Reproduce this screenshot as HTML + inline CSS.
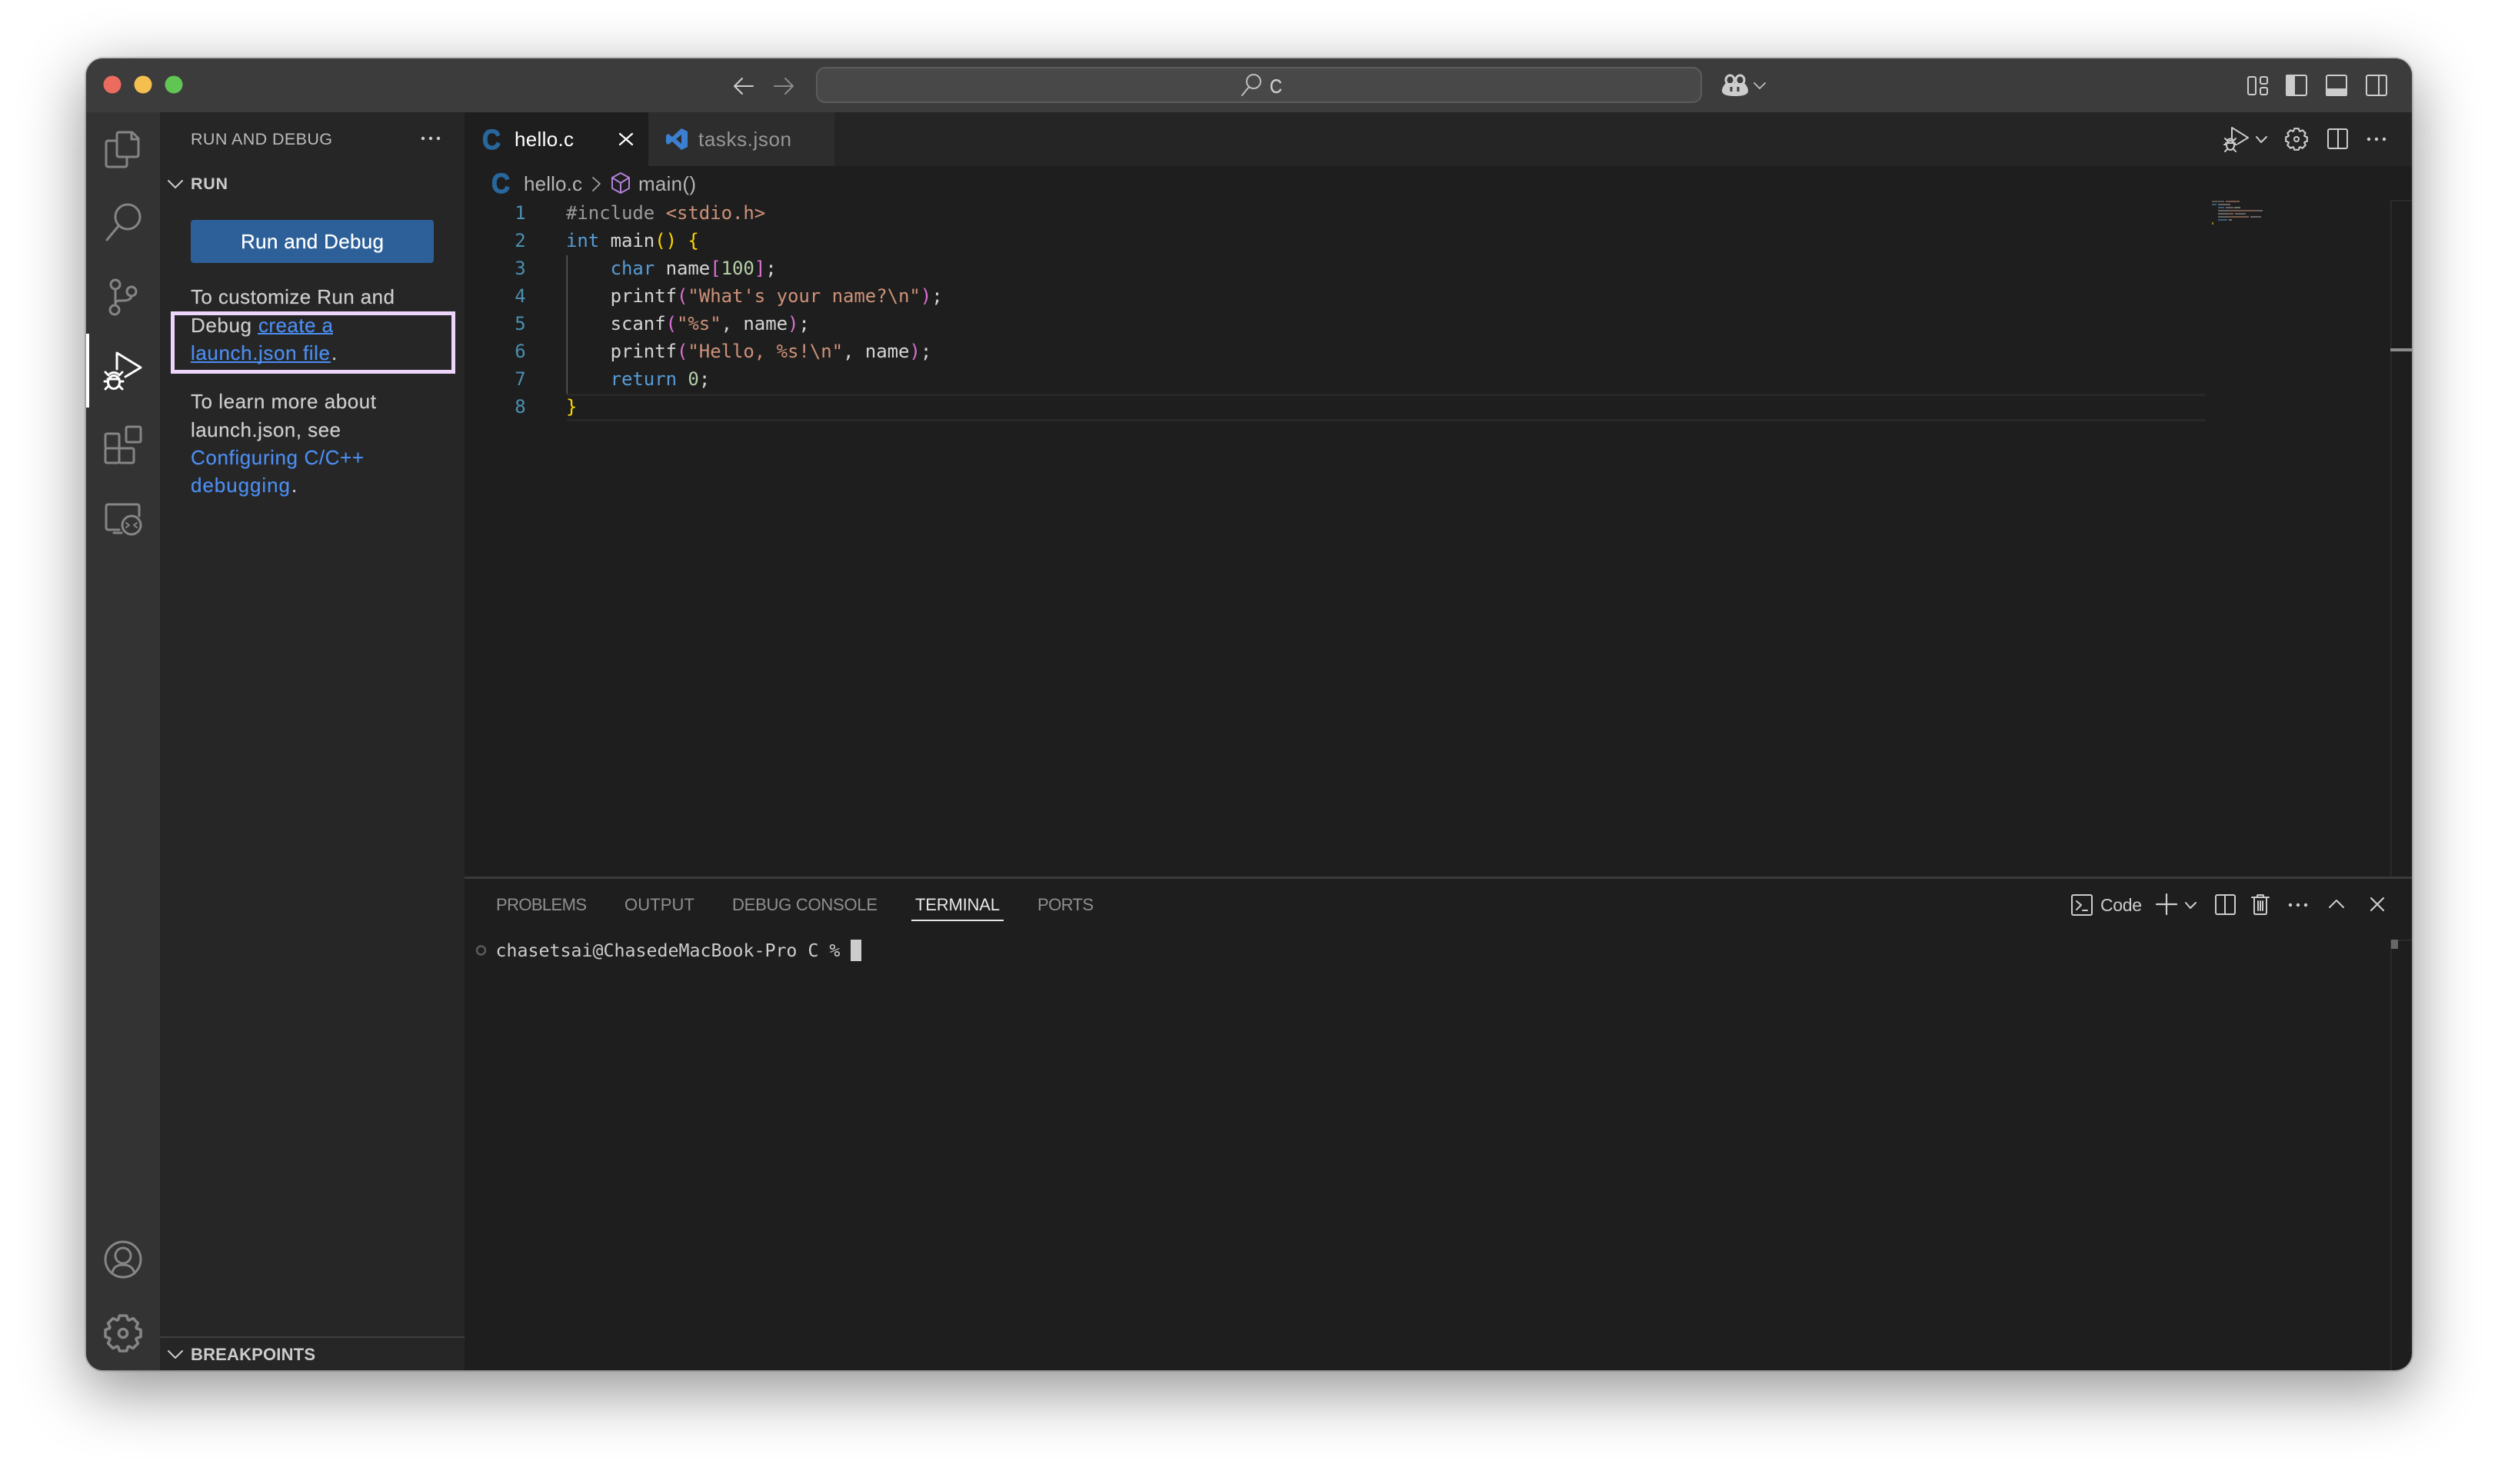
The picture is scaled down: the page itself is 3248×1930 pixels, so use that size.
<!DOCTYPE html>
<html><head><meta charset="utf-8"><style>
html,body{margin:0;padding:0;background:#fff;width:3248px;height:1930px;overflow:hidden}
#win{position:absolute;left:112px;top:76px;width:3024px;height:1706px;border-radius:22px;box-shadow:0 0 2px 1px rgba(0,0,0,.35),0 24px 80px 4px rgba(0,0,0,.42)}
svg{position:absolute;left:0;top:0}
text{font-family:"Liberation Sans",sans-serif;white-space:pre}
.m{font-family:"DejaVu Sans Mono",monospace;font-size:24px;letter-spacing:-.05px}
.s{fill:none;stroke-linecap:round;stroke-linejoin:round}
</style></head><body><div id="win"></div>
<svg width="3248" height="1930" viewBox="0 0 3248 1930" xmlns="http://www.w3.org/2000/svg">
<defs>
<clipPath id="w"><rect x="112" y="76" width="3024" height="1706" rx="22"/></clipPath>
<path id="gear" d="M-6.5-17.5L-4.5-23L4.5-23L6.5-17.5L7.78-16.97L13.08-19.45L19.45-13.08L16.97-7.78L17.5-6.5L23-4.5L23 4.5L17.5 6.5L16.97 7.78L19.45 13.08L13.08 19.45L7.78 16.97L6.5 17.5L4.5 23L-4.5 23L-6.5 17.5L-7.78 16.97L-13.08 19.45L-19.45 13.08L-16.97 7.78L-17.5 6.5L-23 4.5L-23-4.5L-17.5-6.5L-16.97-7.78L-19.45-13.08L-13.08-19.45L-7.78-16.97Z"/>
</defs>
<g clip-path="url(#w)">
<rect x="112" y="76" width="3024" height="1706" fill="#1e1e1e"/>
<rect x="112" y="76" width="3024" height="70" fill="#3c3c3c"/>
<rect x="112" y="146" width="96" height="1636" fill="#333333"/>
<rect x="208" y="146" width="396" height="1636" fill="#262626"/>
<rect x="604" y="146" width="2532" height="70" fill="#252525"/>
<rect x="604" y="146" width="239" height="70" fill="#1e1e1e"/>
<rect x="843" y="146" width="242" height="70" fill="#2d2d2d"/>
<rect x="208" y="1738" width="396" height="2" fill="#3f3f3f"/>
<rect x="604" y="1140" width="2532" height="3" fill="#3a3a3a"/>
<!-- traffic lights -->
<circle cx="146" cy="110" r="11.5" fill="#ed6a5e"/><circle cx="186" cy="110" r="11.5" fill="#f5bf4f"/><circle cx="226" cy="110" r="11.5" fill="#61c554"/>
<!-- nav arrows -->
<g class="s" stroke-width="2"><path stroke="#cccccc" d="M979 112H956M965 102L955 112L965 122"/><path stroke="#8a8a8a" d="M1007 112H1030M1021 102L1031 112L1021 122"/></g>
<!-- command center -->
<rect x="1062" y="88" width="1150" height="45" rx="11" fill="#484848" stroke="#5c5c5c" stroke-width="2"/>
<g class="s" stroke="#bdbdbd" stroke-width="2"><circle cx="1630" cy="106" r="9"/><path d="M1624 113L1615 124"/></g>
<text x="1651" y="121" font-size="25" fill="#cccccc" stroke="#cccccc" stroke-width=".4" textLength="16" lengthAdjust="spacingAndGlyphs">C</text>
<!-- copilot -->
<path fill="#cccccc" d="M2244 108C2240 112 2239 116 2239 118C2239 123 2245 125 2256 125C2267 125 2273 123 2273 118C2273 116 2272 112 2268 108Z"/>
<g class="s" stroke="#cccccc" stroke-width="3"><ellipse cx="2249.500" cy="104" rx="5.500" ry="6"/><ellipse cx="2262.500" cy="104" rx="5.500" ry="6"/></g>
<path stroke="#3c3c3c" stroke-width="3" d="M2251 113V119M2260 113V119"/>
<path class="s" stroke="#bdbdbd" stroke-width="1.800" d="M2281 108L2288 115L2295 108"/>
<!-- title right icons -->
<g class="s" stroke="#cccccc" stroke-width="2">
<rect x="2923" y="100" width="10" height="23" rx="2"/><rect x="2939" y="100" width="9" height="9" rx="2"/><rect x="2939" y="114" width="9" height="9" rx="2"/>
<rect x="2973" y="98" width="26" height="26" rx="2"/><rect x="3025" y="98" width="26" height="26" rx="2"/>
<rect x="3077" y="98" width="26" height="26" rx="2"/><path d="M3093 98V124"/></g>
<path fill="#cccccc" d="M2974 97H2984V125H2974Q2972 125 2972 123V99Q2972 97 2974 97ZM3024 115H3052V123Q3052 125 3050 125H3026Q3024 125 3024 123Z"/>
<!-- activity icons -->
<g class="s" stroke="#858585" stroke-width="3">
<path d="M155 172H172L180 180V201Q180 204 177 204H155Q152 204 152 201V175Q152 172 155 172ZM171 172V181H180"/>
<path d="M152 183H141Q138 183 138 186V214Q138 217 141 217H162Q165 217 165 214V204"/>
<circle cx="166" cy="282" r="16"/><path d="M154 294L139 312"/>
<circle cx="150" cy="370" r="6"/><circle cx="149" cy="403" r="6"/><circle cx="171" cy="379" r="6"/><path d="M150 376V397M171 385Q170 391 160 391H155Q150 391 150 396"/>
<rect x="137" y="564" width="18" height="19" rx="2"/><rect x="137" y="583" width="18" height="19" rx="2"/><rect x="155" y="583" width="19" height="19" rx="2"/><rect x="164" y="555" width="19" height="20" rx="2"/>
<path d="M155 689H141Q138 689 138 686V659Q138 656 141 656H178Q181 656 181 659V671M148 693H158"/><circle cx="171" cy="683" r="12"/><path stroke-width="2" d="M164 680L168 683L164 686M178 680L174 683L178 686"/>
<circle cx="160" cy="1638" r="23"/><circle cx="160" cy="1633" r="10"/><path d="M146 1656C147 1648 152 1645 160 1645C168 1645 173 1648 175 1656"/>
<use href="#gear" x="160" y="1734" stroke-width="3.600"/><circle cx="160" cy="1734" r="5.500" stroke-width="3.600"/>
</g>
<rect x="112" y="434" width="4" height="96" fill="#ffffff"/>
<g class="s" stroke="#ffffff" stroke-width="3">
<path d="M152 480V459L183 478L163 490"/><ellipse cx="148" cy="497" rx="7.500" ry="8.500"/><path d="M143 486Q148 483 153 486M140 493H155M137 484L141 488M159 484L155 488M136 496H140M156 496H160M137 506L141 502M159 506L155 502"/>
</g>
<!-- sidebar -->
<text x="248" y="188" font-size="21.500" fill="#bbbbbb" textLength="184">RUN AND DEBUG</text>
<g fill="#cccccc"><circle cx="550" cy="180" r="2.200"/><circle cx="560" cy="180" r="2.200"/><circle cx="570" cy="180" r="2.200"/></g>
<path class="s" stroke="#cccccc" stroke-width="2" d="M219 235L228 244L237 235"/>
<text x="248" y="246" font-size="21.500" font-weight="700" fill="#cccccc" textLength="48">RUN</text>
<rect x="248" y="286" width="316" height="56" rx="4" fill="#2d6099"/>
<text x="313" y="323" font-size="26" fill="#ffffff" stroke="#ffffff" stroke-width=".25" textLength="186">Run and Debug</text>
<g font-size="26" fill="#cccccc" stroke="#cccccc" stroke-width=".2">
<text x="248" y="395" textLength="265">To customize Run and</text>
<text x="248" y="432" textLength="79">Debug</text>
<text x="431" y="468">.</text>
<text x="248" y="531" textLength="241">To learn more about</text>
<text x="248" y="568" textLength="195">launch.json, see</text>
<text x="379" y="640">.</text>
</g>
<g font-size="26" fill="#4b8df0" stroke="#4b8df0" stroke-width=".2">
<text x="336" y="432" textLength="97">create a</text>
<text x="248" y="468" textLength="181">launch.json file</text>
<text x="248" y="604" textLength="225">Configuring C/C++</text>
<text x="248" y="640" textLength="129">debugging</text>
</g>
<rect x="335" y="433" width="98" height="2" fill="#4b8df0"/><rect x="248" y="470" width="182" height="2" fill="#4b8df0"/>
<rect x="224.500" y="407.500" width="365" height="76" fill="none" stroke="#edd5fb" stroke-width="5"/>
<path class="s" stroke="#cccccc" stroke-width="2" d="M219 1757L228 1766L237 1757"/>
<text x="248" y="1769" font-size="22" font-weight="700" fill="#cccccc" textLength="162">BREAKPOINTS</text>
<!-- tabs -->
<text x="627" y="194" font-size="36" font-weight="700" fill="#28679c" stroke="#28679c" stroke-width="1.200" textLength="24" lengthAdjust="spacingAndGlyphs">C</text>
<text x="669" y="190" font-size="26" fill="#ffffff" textLength="77">hello.c</text>
<path class="s" stroke="#ffffff" stroke-width="2.200" d="M806 174L822 188M822 174L806 188"/>
<path fill="#3b80d0" d="M886 167L894 171V191L886 195L874 184L869 188L866 186V176L869 174L874 178Z"/><path fill="#2d2d2d" d="M886 175L879 181L886 187Z"/>
<text x="908" y="190" font-size="26" fill="#969696" textLength="121">tasks.json</text>
<!-- editor actions -->
<g class="s" stroke="#cccccc" stroke-width="2">
<path d="M2902 180V166L2923 179L2910 187"/><ellipse cx="2900" cy="189" rx="5" ry="6"/><path d="M2896 182Q2900 179 2904 182M2894 186H2906M2893 180L2896 183M2907 180L2904 183M2892 188H2895M2905 188H2908M2893 197L2896 194M2907 197L2904 194"/>
<path d="M2934 178L2940 185L2947 178"/>
<use href="#gear" transform="translate(2986 181) scale(.6)" stroke-width="3.600"/><circle cx="2986" cy="181" r="3"/>
<rect x="3027" y="168" width="25" height="25" rx="2"/><path d="M3040 168V193"/>
</g>
<g fill="#cccccc"><circle cx="3080" cy="181" r="2.200"/><circle cx="3090" cy="181" r="2.200"/><circle cx="3100" cy="181" r="2.200"/></g>
<!-- breadcrumbs -->
<text x="639" y="251" font-size="36" font-weight="700" fill="#28679c" stroke="#28679c" stroke-width="1.200" textLength="24" lengthAdjust="spacingAndGlyphs">C</text>
<text x="681" y="248" font-size="26" fill="#b4b4b4" textLength="76">hello.c</text>
<path class="s" stroke="#a0a0a0" stroke-width="1.800" d="M771 231L780 239L771 248"/>
<path class="s" stroke="#b180d7" stroke-width="2" d="M807 225L818 231V245L807 251L796 245V231ZM796 231L807 238L818 231M807 238V251"/>
<text x="830" y="248" font-size="26" fill="#b4b4b4" textLength="75">main()</text>
<!-- code -->
<rect x="736.500" y="332" width="1.500" height="180" fill="#5a5a5a"/>
<rect x="737" y="512" width="2131" height="3" fill="#282828"/><rect x="737" y="545" width="2131" height="3" fill="#282828"/>
<g class="m" fill="#4b8fb0" text-anchor="middle">
<text class="m" x="676.500" y="285">1</text><text class="m" x="676.500" y="321">2</text><text class="m" x="676.500" y="357">3</text><text class="m" x="676.500" y="393">4</text><text class="m" x="676.500" y="429">5</text><text class="m" x="676.500" y="465">6</text><text class="m" x="676.500" y="501">7</text><text class="m" x="676.500" y="537">8</text>
</g>
<g fill="#d4d4d4">
<text class="m" x="736" y="285"><tspan fill="#9a9a9a">#include </tspan><tspan fill="#ce9178">&lt;stdio.h&gt;</tspan></text>
<text class="m" x="736" y="321"><tspan fill="#569cd6">int</tspan> main<tspan fill="#ffd700">()</tspan> <tspan fill="#ffd700">{</tspan></text>
<text class="m" x="793.600" y="357"><tspan fill="#569cd6">char</tspan> name<tspan fill="#da70d6">[</tspan><tspan fill="#b5cea8">100</tspan><tspan fill="#da70d6">]</tspan>;</text>
<text class="m" x="793.600" y="393">printf<tspan fill="#da70d6">(</tspan><tspan fill="#ce9178">"What's your name?\n"</tspan><tspan fill="#da70d6">)</tspan>;</text>
<text class="m" x="793.600" y="429">scanf<tspan fill="#da70d6">(</tspan><tspan fill="#ce9178">"%s"</tspan>, name<tspan fill="#da70d6">)</tspan>;</text>
<text class="m" x="793.600" y="465">printf<tspan fill="#da70d6">(</tspan><tspan fill="#ce9178">"Hello, %s!\n"</tspan>, name<tspan fill="#da70d6">)</tspan>;</text>
<text class="m" x="793.600" y="501"><tspan fill="#569cd6">return</tspan> <tspan fill="#b5cea8">0</tspan>;</text>
<text class="m" x="736" y="537" fill="#ffd700">}</text>
</g>
<!-- minimap -->
<g opacity=".5">
<rect x="2876" y="261" width="16" height="2" fill="#8a8a8a"/><rect x="2894" y="261" width="18" height="2" fill="#ce9178"/>
<rect x="2876" y="265" width="6" height="2" fill="#569cd6"/><rect x="2884" y="265" width="16" height="2" fill="#aaaaaa"/>
<rect x="2884" y="269" width="8" height="2" fill="#569cd6"/><rect x="2894" y="269" width="10" height="2" fill="#aaaaaa"/><rect x="2905" y="269" width="8" height="2" fill="#b5cea8"/>
<rect x="2884" y="273" width="14" height="2" fill="#aaaaaa"/><rect x="2898" y="273" width="38" height="2" fill="#ce9178"/><rect x="2936" y="273" width="6" height="2" fill="#aaaaaa"/>
<rect x="2884" y="277" width="12" height="2" fill="#aaaaaa"/><rect x="2896" y="277" width="8" height="2" fill="#ce9178"/><rect x="2906" y="277" width="14" height="2" fill="#aaaaaa"/>
<rect x="2884" y="281" width="14" height="2" fill="#aaaaaa"/><rect x="2898" y="281" width="26" height="2" fill="#ce9178"/><rect x="2926" y="281" width="14" height="2" fill="#aaaaaa"/>
<rect x="2884" y="285" width="12" height="2" fill="#569cd6"/><rect x="2898" y="285" width="4" height="2" fill="#b5cea8"/>
<rect x="2876" y="289" width="2" height="3" fill="#ffd700"/>
</g>
<!-- scrollbars -->
<rect x="3108" y="260" width="1.500" height="880" fill="#2f2f2f"/><rect x="3108" y="260" width="28" height="1.500" fill="#2f2f2f"/>
<rect x="3108" y="453" width="28" height="4" fill="#8c8c8c"/>
<rect x="3108" y="1222" width="1.500" height="560" fill="#2f2f2f"/><rect x="3108" y="1222" width="28" height="1.500" fill="#2f2f2f"/>
<rect x="3109" y="1222" width="9" height="12" fill="#666666"/>
<!-- panel tabs -->
<g font-size="22" fill="#8f8f8f">
<text x="645" y="1184" textLength="118">PROBLEMS</text>
<text x="812" y="1184" textLength="91">OUTPUT</text>
<text x="952" y="1184" textLength="189">DEBUG CONSOLE</text>
<text x="1190" y="1184" textLength="110" fill="#e7e7e7">TERMINAL</text>
<text x="1349" y="1184" textLength="73">PORTS</text>
</g>
<rect x="1185" y="1196" width="120" height="2" fill="#e7e7e7"/>
<g class="s" stroke="#cccccc" stroke-width="2">
<rect x="2694" y="1164" width="26" height="26" rx="2"/><path d="M2700 1172L2706 1177L2700 1183M2708 1184H2714"/>
<path stroke-width="2.200" d="M2804 1176H2830M2817 1163V1189"/>
<path d="M2842 1174L2848 1181L2855 1174"/>
<rect x="2881" y="1164" width="25" height="25" rx="2"/><path d="M2893 1164V1189"/>
<path d="M2928 1167H2950M2931 1167V1187Q2931 1189 2933 1189H2945Q2947 1189 2947 1187V1167M2935 1167V1165Q2935 1164 2936 1164H2942Q2943 1164 2943 1165V1167M2936 1172V1184M2939 1172V1184M2942 1172V1184"/>
<path d="M3029 1180L3038 1171L3047 1180"/>
<path stroke-width="2.200" d="M3083 1168L3099 1184M3099 1168L3083 1184"/>
</g>
<text x="2731" y="1185" font-size="23" fill="#cccccc" textLength="54">Code</text>
<g fill="#cccccc"><circle cx="2978" cy="1177" r="2.200"/><circle cx="2988" cy="1177" r="2.200"/><circle cx="2998" cy="1177" r="2.200"/></g>
<!-- terminal -->
<circle cx="625.500" cy="1236" r="5.500" fill="none" stroke="#5a5a5a" stroke-width="2.500"/>
<text x="644.500" y="1244" style="font-family:'DejaVu Sans Mono',monospace;font-size:23.250px" fill="#cccccc">chasetsai@ChasedeMacBook-Pro C %</text>
<rect x="1106" y="1222" width="14" height="28" fill="#cccccc"/>
</g>
</svg></body></html>
